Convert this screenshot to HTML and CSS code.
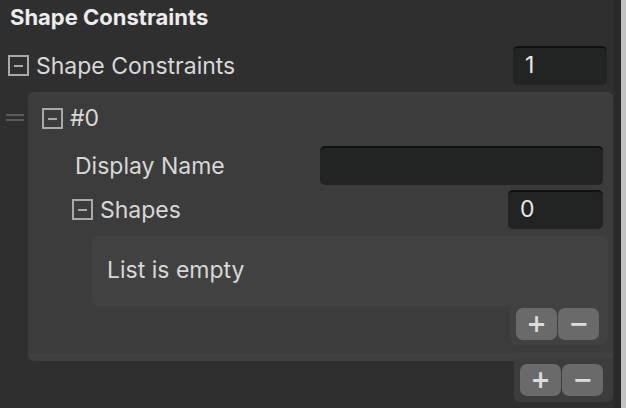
FILE: index.html
```html
<!DOCTYPE html>
<html>
<head>
<meta charset="utf-8">
<link rel="stylesheet" href="styles.css">
</head>
<body>
<div class="app">
  <div class="main">
    <div class="title">Shape Constraints</div>
    <div class="row row-top">
      <span class="fold"></span>
      <span class="label">Shape Constraints</span>
      <div class="field num">1</div>
    </div>
    <div class="item">
      <div class="handle"></div>
      <div class="card">
        <div class="row row-head">
          <span class="fold"></span>
          <span class="label">#0</span>
        </div>
        <div class="row row-prop">
          <span class="label">Display Name</span>
          <div class="field wide"></div>
        </div>
        <div class="row row-shapes">
          <span class="fold"></span>
          <span class="label">Shapes</span>
          <div class="field num">0</div>
        </div>
        <div class="list">List is empty</div>
        <div class="addrem addrem-inner">
          <button class="btn">+</button>
          <button class="btn">&minus;</button>
        </div>
        <div class="card-foot"></div>
      </div>
    </div>
    <div class="addrem addrem-outer">
      <button class="btn">+</button>
      <button class="btn">&minus;</button>
    </div>
  </div>
  <div class="scroll">
    <div class="scroll-track"></div>
    <div class="scroll-thumb"></div>
  </div>
</div>
</body>
</html>
```

FILE: styles.css
```css
html, body {
  margin: 0;
  padding: 0;
}
body {
  background: #2f2f2f;
  font-family: Inter, "Noto Sans", sans-serif;
  color: #d4d4d4;
  width: 626px;
  height: 408px;
  overflow: hidden;
}
.app {
  display: flex;
  height: 408px;
}
.main {
  width: 614px;
  display: flex;
  flex-direction: column;
}
.scroll {
  display: flex;
  height: 408px;
}
.scroll-track {
  width: 7px;
  background: #2a2a2a;
}
.scroll-thumb {
  width: 5px;
  background: #c2c2c2;
}
.title {
  height: 46px;
  line-height: 34px;
  padding-left: 10px;
  font-size: 22px;
  font-weight: 700;
  color: #ececec;
  box-sizing: border-box;
}
.row {
  display: flex;
  align-items: center;
}
.label {
  font-size: 23px;
  color: #d8d8d8;
}
.fold {
  width: 21px;
  height: 21px;
  box-sizing: border-box;
  border: 2px solid #a9a9a9;
  position: relative;
  flex: none;
}
.fold::after {
  content: "";
  position: absolute;
  left: 4px;
  right: 4px;
  top: 8px;
  height: 2px;
  background: #a9a9a9;
}
.row-top {
  height: 39px;
  padding-left: 8px;
  padding-right: 7px;
}
.row-top .label {
  margin-left: 7px;
  flex: 1;
}
.field {
  height: 39px;
  box-sizing: border-box;
  background: #222323;
  border-radius: 5px;
  border-top: 2px solid #111111;
  color: #e8e8e8;
  font-size: 23px;
  line-height: 35px;
  padding-left: 12px;
}
.num {
  width: 94px;
}
.item {
  display: flex;
  margin-top: 7px;
}
.handle {
  width: 18px;
  height: 7px;
  margin: 22px 4px 0 6px;
  border-top: 2px solid #5a5a5a;
  border-bottom: 2px solid #5a5a5a;
  box-sizing: border-box;
  flex: none;
}
.card {
  width: 585px;
  background: #3c3c3c;
  border-radius: 6px;
  display: flex;
  flex-direction: column;
  padding-top: 6px;
  box-shadow: inset 0 4px 0 #3f3f3f;
}
.row-head {
  height: 40px;
  padding-left: 14px;
}
.row-head .label {
  margin-left: 7px;
}
.row-prop {
  height: 39px;
  margin-top: 8px;
  padding-left: 47px;
  padding-right: 10px;
}
.row-prop .label {
  flex: 1;
}
.wide {
  width: 283px;
}
.row-shapes {
  height: 39px;
  margin-top: 5px;
  padding-left: 44px;
  padding-right: 10px;
}
.row-shapes .label {
  margin-left: 7px;
  flex: 1;
}
.row-shapes .num {
  width: 95px;
}
.list {
  margin: 7px 5px 0 64px;
  height: 70px;
  background: #414141;
  border-radius: 6px 6px 0 6px;
  padding-left: 15px;
  font-size: 23px;
  line-height: 68px;
  color: #d8d8d8;
}
.addrem {
  display: flex;
  gap: 1px;
  box-sizing: border-box;
  align-self: flex-end;
  border-radius: 0 0 6px 6px;
}
.addrem-inner {
  width: 98px;
  height: 39px;
  margin-right: 5px;
  padding: 2px 8px 0 6px;
  background: #414141;
}
.addrem-outer {
  width: 99px;
  height: 44px;
  margin-top: -3px;
  margin-right: 1px;
  padding: 6px 9px 0 6px;
  background: #3c3c3c;
  position: relative;
}
.btn {
  width: 41px;
  height: 32px;
  border: none;
  border-radius: 7px;
  background: #6a6a6a;
  color: #dcdcdc;
  font-family: "DejaVu Sans", sans-serif;
  font-size: 24px;
  font-weight: 700;
  line-height: 32px;
  padding: 0;
}
.card-foot {
  margin-top: 8px;
  height: 8px;
  background: #404040;
  border-radius: 0 0 6px 6px;
}
```
